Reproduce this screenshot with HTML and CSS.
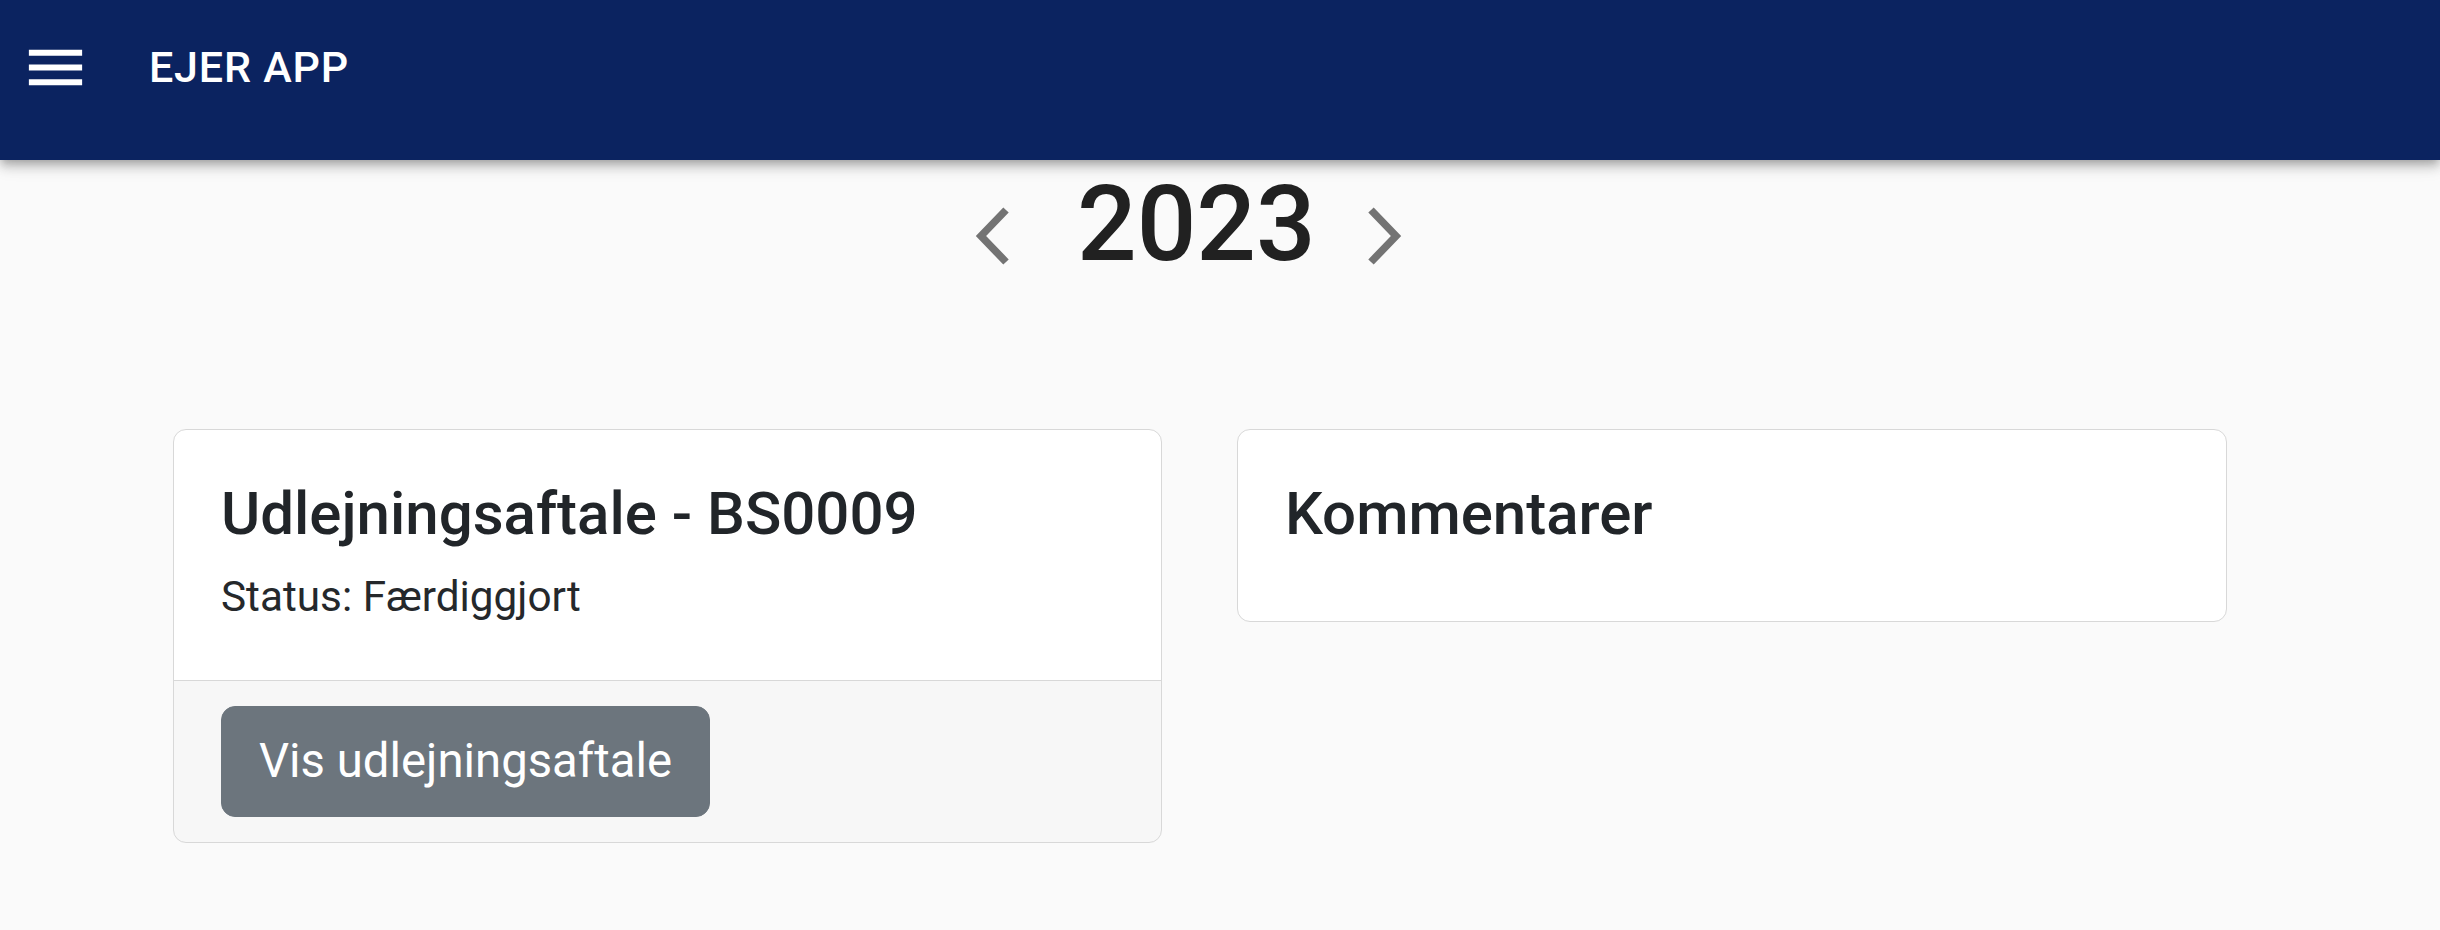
FILE: index.html
```html
<!DOCTYPE html>
<html lang="da">
<head>
<meta charset="utf-8">
<title>Ejer App</title>
<link rel="stylesheet" href="styles.css">
</head>
<body>
<header class="appbar">
  <div class="toolbar">
    <button class="menu-btn" aria-label="menu">
      <svg class="menu-icon" viewBox="0 0 24 24"><path d="M3 18h18v-2H3v2zm0-5h18v-2H3v2zm0-7v2h18V6H3z"/></svg>
    </button>
    <h6 class="app-title">EJER APP</h6>
  </div>
</header>
<main class="main">
  <div class="year-row">
    <svg class="chev chev-left" viewBox="0 0 36 60"><polyline points="31,4 6,30 31,56"/></svg>
    <h1 class="year">2023</h1>
    <svg class="chev chev-right" viewBox="0 0 36 60"><polyline points="5,4 30,30 5,56"/></svg>
  </div>
  <div class="cards">
    <div class="card">
      <div class="card-body">
        <h5 class="card-title">Udlejningsaftale - BS0009</h5>
        <p class="card-status">Status: Færdiggjort</p>
      </div>
      <div class="card-footer">
        <button class="btn">Vis udlejningsaftale</button>
      </div>
    </div>
    <div class="card">
      <div class="card-body">
        <h5 class="card-title">Kommentarer</h5>
      </div>
    </div>
  </div>
</main>
</body>
</html>
```
FILE: styles.css
```css
html, body {
  margin: 0;
  padding: 0;
}
body {
  background: #fafafa;
  font-family: Roboto, "Liberation Sans", Arial, sans-serif;
  color: #212529;
  width: 2440px;
  height: 930px;
  overflow: hidden;
}
.appbar {
  background: #0b2360;
  height: 160px;
  box-sizing: border-box;
  padding-bottom: 26px;
  box-shadow: 0 4px 8px -2px rgba(0,0,0,0.2), 0 8px 10px 0 rgba(0,0,0,0.14), 0 2px 21px 0 rgba(0,0,0,0.12);
  position: relative;
  z-index: 2;
}
.toolbar {
  height: 134px;
  display: flex;
  align-items: center;
  padding-left: 20px;
}
.menu-btn {
  background: none;
  border: 0;
  padding: 0;
  margin: 0;
  width: 71px;
  height: 71px;
  display: flex;
}
.menu-icon {
  width: 71px;
  height: 71px;
  fill: #ffffff;
}
.app-title {
  margin: 0 0 0 58px;
  color: #ffffff;
  font-size: 43px;
  font-weight: 500;
  letter-spacing: 0.8px;
  line-height: 1.6;
}
.main {
  padding: 0 213px 0 173px;
}
.year-row {
  display: flex;
  align-items: flex-start;
  margin-top: 2px;
  padding-left: 802px;
  height: 126px;
}
.chev {
  width: 36px;
  height: 60px;
  margin-top: 44px;
  flex: none;
}
.chev polyline {
  fill: none;
  stroke: #737373;
  stroke-width: 7.5;
  stroke-linecap: butt;
  stroke-linejoin: miter;
}
.year {
  margin: 0 50px 0 66px;
  font-size: 105px;
  font-weight: 500;
  line-height: 1.2;
  color: #212121;
}
.cards {
  margin-top: 141px;
  display: grid;
  grid-template-columns: 989px 990px;
  column-gap: 75px;
  align-items: start;
}
.card {
  background: #ffffff;
  border: 1px solid #d8d8d8;
  border-radius: 13px;
  overflow: hidden;
}
.card-body {
  padding: 48px 47px;
}
.card-title {
  margin: 0 0 23px;
  font-size: 60px;
  font-weight: 500;
  line-height: 1.2;
  color: #212529;
}
.card-status {
  margin: 0 0 11px;
  font-size: 42.3px;
  line-height: 48px;
  color: #25282b;
}
.card-footer {
  background: rgba(0,0,0,0.03);
  border-top: 1px solid #d8d8d8;
  padding: 25px 47px;
}
.btn {
  display: inline-block;
  background: #6c757d;
  border: 1px solid #6c757d;
  color: #ffffff;
  font-family: Roboto, "Liberation Sans", Arial, sans-serif;
  font-size: 47.3px;
  line-height: 1.5;
  padding: 19px 37px;
  border-radius: 14px;
  margin: 0;
}
```
